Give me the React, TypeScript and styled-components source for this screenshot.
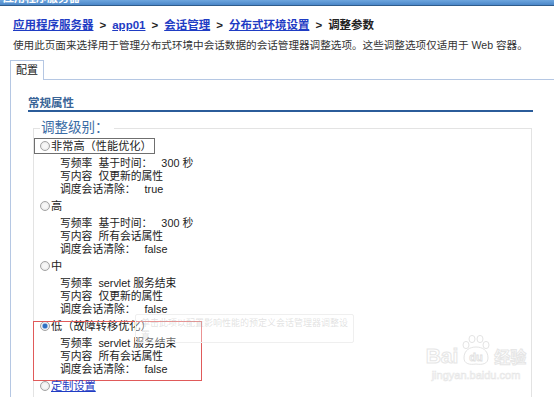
import React from "react";
import styled, { createGlobalStyle } from "styled-components";

const GlobalStyle = createGlobalStyle`
  html, body { margin: 0; padding: 0; background: #fff; }
  body {
    font-family: "Liberation Sans", "Noto Sans CJK SC", sans-serif;
    width: 554px;
    height: 397px;
    overflow: hidden;
  }
`;

const Page = styled.div`
  position: relative;
  width: 554px;
  height: 397px;
  overflow: hidden;
  display: flex;
  flex-direction: column;
`;

const TitleBar = styled.div`
  flex: none;
  height: 5px;
  overflow: hidden;
  background: linear-gradient(#6ea6de, #4b87c9);
  border-bottom: 1px solid #2f5c8c;
  color: #fff;
  font-weight: bold;
  font-size: 11px;
  line-height: 14px;
  padding-left: 3px;
`;

const TitleText = styled.div`
  margin-top: -9px;
`;

const Breadcrumb = styled.div`
  flex: none;
  height: 14px;
  margin: 12px 0 0 13px;
  font-size: 11.5px;
  line-height: 14px;
  font-weight: bold;
  color: #222;
  white-space: nowrap;
`;

const Crumb = styled.a`
  color: #1f3cc4;
  text-decoration: underline;
`;

const Sep = styled.span`
  margin: 0 6px;
`;

const Description = styled.div`
  flex: none;
  height: 14px;
  margin: 6px 0 0 13px;
  font-size: 10.6px;
  line-height: 14px;
  color: #333;
  white-space: nowrap;
`;

const TabStrip = styled.div`
  display: flex;
  margin: 8px 0 0 10px;
  height: 20px;
  flex: none;
`;

const Tab = styled.div`
  box-sizing: border-box;
  height: 20px;
  padding: 0 5px;
  border: 1px solid #b5c7e3;
  border-bottom: none;
  font-size: 11px;
  line-height: 19px;
  color: #222;
  background: #fff;
`;

const TabFill = styled.div`
  flex: 1;
  border-bottom: 1px solid #b5c7e3;
`;

const Panel = styled.div`
  flex: 1;
  margin-left: 10px;
  border-left: 1px solid #b5c7e3;
  display: flex;
  flex-direction: column;
`;

const SectionTitle = styled.div`
  height: 14px;
  margin: 16px 21px 0 17px;
  font-size: 11.5px;
  line-height: 14px;
  font-weight: bold;
  color: #3a6597;
  border-bottom: 2px solid #2b5c9a;
`;

const Fieldset = styled.fieldset`
  margin: 8px 22px 0 22px;
  padding: 2px 6px 0 6px;
  border: 1px solid #e3e3e3;
  border-bottom: none;
  min-width: 0;
  flex: 1;
`;

const Legend = styled.legend`
  height: 16px;
  padding: 0 5px 0 1px;
  font-size: 13.5px;
  line-height: 16px;
  color: #3a6ca5;
`;

const Block = styled.div`
  position: relative;
  margin-bottom: 2px;
`;

const RadioLabel = styled.label<{ $focused?: boolean }>`
  display: inline-flex;
  align-items: center;
  box-sizing: border-box;
  height: 16px;
  line-height: 14px;
  margin-left: -6px;
  padding: 0 2px 0 5px;
  border: 1px solid ${(p) => (p.$focused ? "#6f6f6f" : "transparent")};
  font-size: 11.2px;
  color: #222;
  white-space: nowrap;
  vertical-align: top;
`;

const Radio = styled.span<{ $checked?: boolean }>`
  box-sizing: border-box;
  width: 10px;
  height: 10px;
  border-radius: 50%;
  border: 1px solid #a3a3a3;
  margin-right: 1px;
  background: ${(p) =>
    p.$checked
      ? "radial-gradient(circle, #2f6fc2 0 2px, #9fc0ea 2.6px, #f4f4f4 3.4px, #d6d6d6 100%)"
      : "radial-gradient(circle, #f7f7f7 0 2px, #dedede 100%)"};
`;

const LinkText = styled.a`
  color: #1f3cc4;
  text-decoration: underline;
`;

const RowHead = styled.div`
  height: 16px;
`;

const Details = styled.div`
  margin: 3px 0 0 20px;
  font-size: 10.8px;
  color: #222;
`;

const Line = styled.div`
  height: 13px;
  line-height: 13px;
  white-space: pre;
`;

const RedBox = styled.div`
  position: absolute;
  top: 3px;
  left: -7px;
  width: 169px;
  height: 60px;
  box-sizing: border-box;
  border: 1px solid #e05a5a;
  pointer-events: none;
`;

const Tooltip = styled.div`
  position: absolute;
  left: 135px;
  top: 314px;
  width: 219px;
  height: 29px;
  box-sizing: border-box;
  padding: 2px 5px;
  border: 1px solid #efefef;
  border-radius: 2px;
  background: rgba(255, 255, 255, 0.35);
  font-family: "Noto Sans CJK SC", sans-serif;
  font-size: 9px;
  line-height: 12px;
  color: rgba(170, 170, 170, 0.35);
  white-space: nowrap;
  pointer-events: none;
`;

const Watermark = styled.div`
  position: absolute;
  left: 424px;
  top: 332px;
  width: 104px;
  display: flex;
  flex-direction: column;
  align-items: center;
  pointer-events: none;
`;

const MarkRow = styled.div`
  display: flex;
  align-items: flex-end;
  height: 34px;
`;

const Hollow = styled.span<{ $size: number }>`
  font-family: "Liberation Sans", "Noto Sans CJK SC", sans-serif;
  font-weight: bold;
  font-size: ${(p) => p.$size}px;
  line-height: 1;
  color: #fff;
  -webkit-text-stroke: 1px #e6e6e6;
`;

const MarkUrl = styled.div`
  font-family: "Liberation Sans", sans-serif;
  font-size: 11px;
  line-height: 12px;
  color: #fff;
  -webkit-text-stroke: 0.6px #e6e6e6;
  margin-top: 3px;
`;

type Option = {
  label: React.ReactNode;
  lines?: string[];
  checked?: boolean;
  focused?: boolean;
  marked?: boolean;
};

const options: Option[] = [
  {
    label: "非常高（性能优化）",
    focused: true,
    lines: ["写频率  基于时间：   300 秒", "写内容  仅更新的属性", "调度会话清除：   true"],
  },
  {
    label: "高",
    lines: ["写频率  基于时间：   300 秒", "写内容  所有会话属性", "调度会话清除：   false"],
  },
  {
    label: "中",
    lines: ["写频率  servlet 服务结束", "写内容  仅更新的属性", "调度会话清除：   false"],
  },
  {
    label: "低（故障转移优化）",
    checked: true,
    marked: true,
    lines: ["写频率  servlet 服务结束", "写内容  所有会话属性", "调度会话清除：   false"],
  },
  {
    label: <LinkText>定制设置</LinkText>,
  },
];

function Paw() {
  return (
    <svg width="36" height="32" viewBox="0 0 36 32">
      <g fill="#fff" stroke="#e4e4e4" strokeWidth="1">
        <ellipse cx="8" cy="11" rx="3" ry="3.6" />
        <ellipse cx="14" cy="5" rx="3" ry="3.6" />
        <ellipse cx="22" cy="5" rx="3" ry="3.6" />
        <ellipse cx="28" cy="11" rx="3" ry="3.6" />
        <path d="M6 24 C6 16 12 13 18 13 C24 13 30 16 30 24 C30 30 24 31 18 30 C12 31 6 30 6 24 Z" />
      </g>
      <text
        x="18"
        y="27"
        textAnchor="middle"
        fontFamily="Liberation Sans, sans-serif"
        fontWeight="bold"
        fontSize="11"
        fill="#fff"
        stroke="#e0e0e0"
        strokeWidth="0.8"
      >
        du
      </text>
    </svg>
  );
}

export default function App() {
  return (
    <Page>
      <GlobalStyle />
      <TitleBar>
        <TitleText>应用程序服务器</TitleText>
      </TitleBar>
      <Breadcrumb>
        <Crumb>应用程序服务器</Crumb>
        <Sep>&gt;</Sep>
        <Crumb>app01</Crumb>
        <Sep>&gt;</Sep>
        <Crumb>会话管理</Crumb>
        <Sep>&gt;</Sep>
        <Crumb>分布式环境设置</Crumb>
        <Sep>&gt;</Sep>
        <span>调整参数</span>
      </Breadcrumb>
      <Description>
        使用此页面来选择用于管理分布式环境中会话数据的会话管理器调整选项。这些调整选项仅适用于 Web 容器。
      </Description>
      <TabStrip>
        <Tab>配置</Tab>
        <TabFill />
      </TabStrip>
      <Panel>
        <SectionTitle>常规属性</SectionTitle>
        <Fieldset>
          <Legend>调整级别：</Legend>
          {options.map((o, i) => (
            <Block key={i}>
              <RowHead>
                <RadioLabel $focused={o.focused}>
                  <Radio $checked={o.checked} />
                  {o.label}
                </RadioLabel>
              </RowHead>
              {o.lines && (
                <Details>
                  {o.lines.map((l, j) => (
                    <Line key={j}>{l}</Line>
                  ))}
                </Details>
              )}
              {o.marked && <RedBox />}
            </Block>
          ))}
        </Fieldset>
      </Panel>
      <Tooltip>
        单击此项以配置影响性能的预定义会话管理器调整设
        <br />置
      </Tooltip>
      <Watermark>
        <MarkRow>
          <Hollow $size={21}>Bai</Hollow>
          <Paw />
          <Hollow $size={16}>经验</Hollow>
        </MarkRow>
        <MarkUrl>jingyan.baidu.com</MarkUrl>
      </Watermark>
    </Page>
  );
}
